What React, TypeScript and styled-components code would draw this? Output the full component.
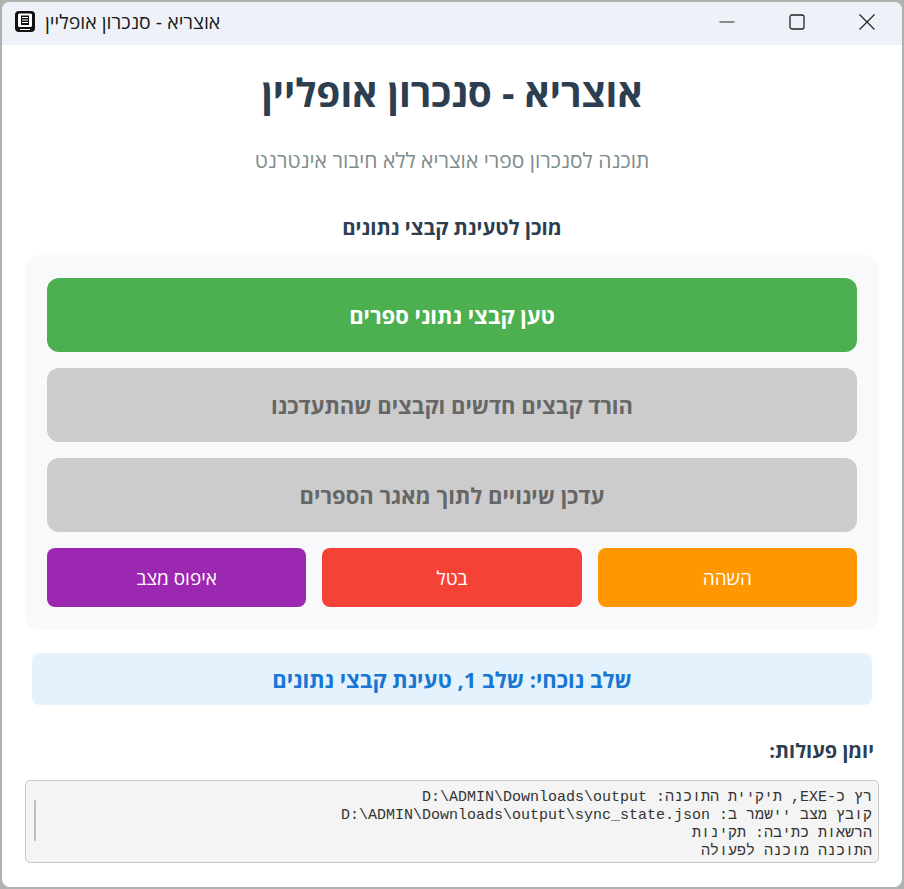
import React from "react";
import styled, { createGlobalStyle } from "styled-components";

const Global = createGlobalStyle`
  html, body { margin: 0; padding: 0; background: #aeb4ae; }
  #root { width: 904px; height: 889px; overflow: hidden; }
`;

const Desktop = styled.div`
  width: 904px;
  height: 889px;
  box-sizing: border-box;
  padding: 2px;
  background: #afb3af;
`;

const Window = styled.div`
  height: 885px;
  background: #fff;
  border-radius: 8px;
  overflow: hidden;
  display: flex;
  flex-direction: column;
`;

const TitleBar = styled.header`
  height: 43px;
  flex: none;
  box-sizing: border-box;
  padding: 0 0 4px 13px;
  background: #eef2f8;
  display: flex;
  align-items: center;
`;

const AppIcon = styled.svg`
  width: 20px;
  height: 21px;
  flex: none;
`;

const TitleText = styled.span`
  font-family: "Open Sans", "Liberation Sans", sans-serif;
  font-size: 19.5px;
  line-height: 24px;
  color: #1b1b1b;
  margin-left: 10px;
  direction: rtl;
`;

const WindowControls = styled.div`
  margin-left: auto;
  display: flex;
  height: 100%;
`;

const ControlButton = styled.div`
  width: 70px;
  height: 100%;
  display: flex;
  align-items: center;
  justify-content: center;
`;

const Main = styled.main`
  flex: 1;
  direction: rtl;
  padding: 0 23px;
  display: flex;
  flex-direction: column;
  font-family: "Open Sans", "Liberation Sans", sans-serif;
`;

const Heading = styled.h1`
  margin: 20px 0 0;
  height: 54px;
  line-height: 54px;
  text-align: center;
  font-size: 38.8px;
  font-weight: 700;
  color: #2c3e50;
`;

const Subtitle = styled.p`
  margin: 26px 0 0;
  height: 30px;
  line-height: 30px;
  text-align: center;
  font-size: 21px;
  color: #7f8c8d;
`;

const Status = styled.h2`
  margin: 37px 0 0;
  height: 30px;
  line-height: 30px;
  text-align: center;
  font-size: 20.4px;
  font-weight: 700;
  color: #2c3e50;
`;

const Panel = styled.section`
  margin-top: 13px;
  background: #f8f9fa;
  border-radius: 15px;
  padding: 23px 22px;
  display: flex;
  flex-direction: column;
  gap: 16px;
`;

const BigButton = styled.div<{ $bg: string; $fg: string }>`
  height: 74px;
  border-radius: 12px;
  background: ${(p) => p.$bg};
  color: ${(p) => p.$fg};
  display: flex;
  align-items: center;
  justify-content: center;
  font-size: 22px;
  font-weight: 700;
`;

const SmallRow = styled.div`
  display: flex;
  gap: 16px;
`;

const SmallButton = styled.div<{ $bg: string }>`
  flex: 1;
  height: 59px;
  border-radius: 8px;
  background: ${(p) => p.$bg};
  color: #fff;
  display: flex;
  align-items: center;
  justify-content: center;
  font-size: 19px;
`;

const StepBox = styled.div`
  margin: 23px 7px 0;
  height: 52px;
  border-radius: 8px;
  background: #e3f2fd;
  color: #1976d2;
  display: flex;
  align-items: center;
  justify-content: center;
  font-size: 22px;
  font-weight: 700;
`;

const LogTitle = styled.h3`
  margin: 31px 0 0;
  padding: 0 5px;
  height: 30px;
  line-height: 30px;
  font-size: 20px;
  font-weight: 700;
  color: #2c3e50;
`;

const LogBox = styled.div`
  position: relative;
  margin-top: 14px;
  height: 83px;
  box-sizing: border-box;
  background: #f4f4f4;
  border: 1px solid #c8c8c8;
  border-radius: 5px;
  padding: 8px 6px 0;
  font-family: "Liberation Mono", monospace;
  font-size: 15px;
  line-height: 18px;
  color: #333;
`;

const LogLine = styled.div`
  white-space: nowrap;
`;

const ScrollThumb = styled.div`
  position: absolute;
  left: 8px;
  top: 19px;
  width: 2px;
  height: 41px;
  background: #bdbdbd;
  border-radius: 1px;
`;

export default function App() {
  return (
    <Desktop>
      <Global />
      <Window>
        <TitleBar>
          <AppIcon viewBox="0 0 20 21">
            <rect x="0" y="0" width="20" height="21" rx="4" fill="#111" />
            <rect x="3" y="2.5" width="14" height="13.5" rx="1.5" fill="#fff" />
            <rect x="6" y="4.5" width="8" height="9.5" fill="#111" />
            <path d="M7 6.5h6M7 9h6M7 11.5h6" stroke="#fff" strokeWidth="1.1" />
            <path d="M5 18.5h10" stroke="#fff" strokeWidth="1.2" />
          </AppIcon>
          <TitleText>אוצריא - סנכרון אופליין</TitleText>
          <WindowControls>
            <ControlButton>
              <svg width="16" height="16" viewBox="0 0 16 16">
                <path d="M0.5 8h15" stroke="#222" strokeWidth="1.1" />
              </svg>
            </ControlButton>
            <ControlButton>
              <svg width="16" height="16" viewBox="0 0 16 16">
                <rect x="1" y="1" width="14" height="14" rx="2" fill="none" stroke="#222" strokeWidth="1.3" />
              </svg>
            </ControlButton>
            <ControlButton>
              <svg width="16" height="16" viewBox="0 0 16 16">
                <path d="M0.5 0.5l15 15M15.5 0.5l-15 15" stroke="#222" strokeWidth="1.2" />
              </svg>
            </ControlButton>
          </WindowControls>
        </TitleBar>
        <Main>
          <Heading>אוצריא - סנכרון אופליין</Heading>
          <Subtitle>תוכנה לסנכרון ספרי אוצריא ללא חיבור אינטרנט</Subtitle>
          <Status>מוכן לטעינת קבצי נתונים</Status>
          <Panel>
            <BigButton $bg="#4caf50" $fg="#fff">טען קבצי נתוני ספרים</BigButton>
            <BigButton $bg="#cccccc" $fg="#666">הורד קבצים חדשים וקבצים שהתעדכנו</BigButton>
            <BigButton $bg="#cccccc" $fg="#666">עדכן שינויים לתוך מאגר הספרים</BigButton>
            <SmallRow>
              <SmallButton $bg="#ff9800">השהה</SmallButton>
              <SmallButton $bg="#f44336">בטל</SmallButton>
              <SmallButton $bg="#9c27b0">איפוס מצב</SmallButton>
            </SmallRow>
          </Panel>
          <StepBox>שלב נוכחי: שלב 1, טעינת קבצי נתונים</StepBox>
          <LogTitle>יומן פעולות:</LogTitle>
          <LogBox>
            <LogLine>רץ כ-EXE, תיקיית התוכנה: D:\ADMIN\Downloads\output</LogLine>
            <LogLine>קובץ מצב יישמר ב: D:\ADMIN\Downloads\output\sync_state.json</LogLine>
            <LogLine>הרשאות כתיבה: תקינות</LogLine>
            <LogLine>התוכנה מוכנה לפעולה</LogLine>
            <ScrollThumb />
          </LogBox>
        </Main>
      </Window>
    </Desktop>
  );
}
